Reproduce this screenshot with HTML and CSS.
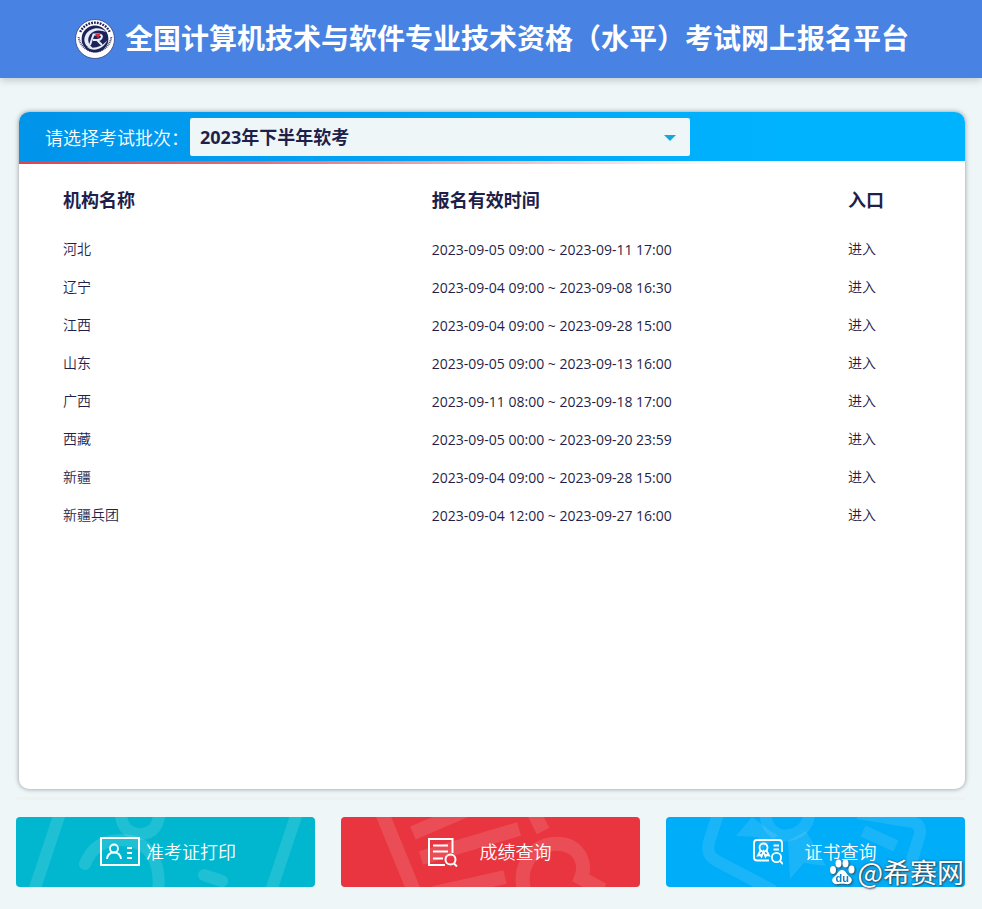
FILE: index.html
```html
<!DOCTYPE html>
<html lang="zh-CN">
<head>
<meta charset="utf-8">
<meta name="viewport" content="width=device-width, initial-scale=1">
<title>全国计算机技术与软件专业技术资格（水平）考试网上报名平台</title>
<link rel="stylesheet" href="styles.css">
</head>
<body>
<header class="site-header">
  <svg class="logo" viewBox="0 0 40 40" aria-hidden="true">
    <circle cx="20" cy="20" r="19.5" fill="#fff" stroke="#31417f" stroke-width=".8"/>
    <path d="M5.2 13A16.4 16.4 0 0 1 34.8 13" fill="none" stroke="#25265a" stroke-width="2.4" stroke-dasharray="1.8 1.100"/>
    <path d="M3.7 18A16.4 16.4 0 0 0 36.3 18" fill="none" stroke="#4a4c7c" stroke-width="2" stroke-dasharray="1 .8"/>
    <circle cx="20" cy="20" r="13.4" fill="#1b2358"/>
    <path d="M31 13C26 7.500 15 8 10.500 16C7 23 11.500 29.500 19 30C13.500 26 11.500 20.500 15 15.500C18.500 11 25 10.500 31 13Z" fill="#e8ecf8"/>
    <path d="M12 28C18 33 28 31 32.500 21C27.500 27.500 20 30 12 28Z" fill="#e8ecf8"/>
    <path d="M15 26L18.500 15.500H24Q28 16 26.500 19Q25.500 21 22 21L27 26M18 21h4" fill="none" stroke="#e8ecf8" stroke-width="2"/>
    <path d="M20 15l5.500 0-2.500 4.500z" fill="#d52b40"/>
  </svg>
  <h1 class="site-title">全国计算机技术与软件专业技术资格（水平）考试网上报名平台</h1>
</header>

<main class="page">
  <section class="card">
    <div class="card-head">
      <label class="batch-label" for="batch">请选择考试批次：</label>
      <div class="select-wrap">
        <select class="batch-select" id="batch"><option>2023年下半年软考</option></select>
        <svg class="caret" viewBox="0 0 12 6" aria-hidden="true"><path d="M0 0h12L6 6z" fill="#14a9d8"/></svg>
      </div>
    </div>
    <div class="accent"></div>
    <table class="list">
      <colgroup><col class="col-name"><col class="col-time"><col class="col-entry"></colgroup>
      <thead><tr><th scope="col">机构名称</th><th scope="col">报名有效时间</th><th scope="col">入口</th></tr></thead>
      <tbody>
        <tr><td>河北</td><td class="time">2023-09-05 09:00 ~ 2023-09-11 17:00</td><td><a href="#">进入</a></td></tr>
        <tr><td>辽宁</td><td class="time">2023-09-04 09:00 ~ 2023-09-08 16:30</td><td><a href="#">进入</a></td></tr>
        <tr><td>江西</td><td class="time">2023-09-04 09:00 ~ 2023-09-28 15:00</td><td><a href="#">进入</a></td></tr>
        <tr><td>山东</td><td class="time">2023-09-05 09:00 ~ 2023-09-13 16:00</td><td><a href="#">进入</a></td></tr>
        <tr><td>广西</td><td class="time">2023-09-11 08:00 ~ 2023-09-18 17:00</td><td><a href="#">进入</a></td></tr>
        <tr><td>西藏</td><td class="time">2023-09-05 00:00 ~ 2023-09-20 23:59</td><td><a href="#">进入</a></td></tr>
        <tr><td>新疆</td><td class="time">2023-09-04 09:00 ~ 2023-09-28 15:00</td><td><a href="#">进入</a></td></tr>
        <tr><td>新疆兵团</td><td class="time">2023-09-04 12:00 ~ 2023-09-27 16:00</td><td><a href="#">进入</a></td></tr>
      </tbody>
    </table>
  </section>

  <hr class="divider">

  <nav class="actions">
    <button class="action action-print" type="button">
      <svg class="pattern" viewBox="0 0 299 70" preserveAspectRatio="xMidYMid slice" aria-hidden="true">
        <g fill="none" stroke="#fff" stroke-opacity=".12" stroke-width="12">
          <path d="M44-4L18 74M281-4L255 74"/>
          <path d="M105-8C104 8 111 17 124 17C137 17 144 8 143-8"/>
          <path d="M69 47C76 29 89 23 105 23C132 23 146 43 142 76M188 58L206 64" stroke-linecap="round"/>
        </g>
      </svg>
      <svg class="icon icon-wide" viewBox="0 0 40 30" fill="none" stroke="#fff" aria-hidden="true">
        <rect x="1" y="1" width="38" height="27" stroke-width="2"/>
        <g stroke-width="1.800"><circle cx="14" cy="11.500" r="4"/><path d="M7 22C7.500 18 10 15.500 14 15.500C18 15.500 20.500 18 21 22M27 11h5M27 16h5M27 21h5"/></g>
      </svg>
      <span>准考证打印</span>
    </button>
    <button class="action action-score" type="button">
      <svg class="pattern" viewBox="0 0 299 70" preserveAspectRatio="xMidYMid slice" aria-hidden="true">
        <g fill="none" stroke="#fff" stroke-opacity=".12" stroke-width="14">
          <path d="M41-4L73 74M72 16L128-8M80 41L178 12M93 76L164 60M192-6L202 14"/>
          <path d="M184 76C176 52 190 29 212 27C235 25 247 43 240 61L262 73"/>
        </g>
      </svg>
      <svg class="icon" viewBox="0 0 30 30" fill="none" stroke="#fff" stroke-width="2" aria-hidden="true">
        <path d="M17 28H1V2h23.500v14M5 8.500h15M5 14.500h15M5 21.500h10"/>
        <circle cx="22.500" cy="22.500" r="5"/><path d="M26 26.500l3 3"/>
      </svg>
      <span>成绩查询</span>
    </button>
    <button class="action action-cert" type="button">
      <svg class="pattern" viewBox="0 0 299 70" preserveAspectRatio="xMidYMid slice" aria-hidden="true">
        <g fill="none" stroke="#fff" stroke-opacity=".1" stroke-width="12">
          <path d="M53-6L43 25C41 34 43 40 51 44L108 74M192-4L247 5C253 7 256 13 253 20L239 65" stroke-linejoin="round"/>
          <path d="M99-8C99 14 112 20 123 18C137 16 146 4 141-8M197 14L230 29"/>
        </g>
        <path d="M86 0L70 19L92 20L94 34L112 18L122 24L124 62L138 46L160 49L140 14L122 24L104 14Z" fill="#fff" fill-opacity=".1"/>
      </svg>
      <svg class="icon" viewBox="0 0 30 30" fill="none" stroke="#fff" stroke-width="1.800" aria-hidden="true">
        <path d="M16 23.500H4Q1 23.500 1 20.500V6Q1 3 4 3h22q3 0 3 3v9M20.500 8.500h5.500M20.500 12.500h5.500"/>
        <circle cx="10.500" cy="10.500" r="4"/><path d="M7.500 13.500L5 18.500l2.500-.500 1 1.500 2-5 2 5 1-1.500 2.500.500-2.500-5"/>
        <circle cx="23.500" cy="20.500" r="4.600"/><path d="M27 24l3 3"/>
      </svg>
      <span>证书查询</span>
    </button>
  </nav>
</main>

<div class="watermark">
  <svg class="paw" viewBox="0 0 26 26" aria-hidden="true">
    <g fill="#fff"><ellipse cx="4" cy="11" rx="3" ry="4"/><ellipse cx="9.500" cy="4.500" rx="3" ry="4"/><ellipse cx="16.500" cy="4.500" rx="3" ry="4"/><ellipse cx="22.500" cy="10.500" rx="3" ry="4"/>
    <path d="M13 11C9 11 9 15 5 18C1 21 4 26 9 25C12 24.500 14 24.500 17 25C22 26 25 21 21 18C17 15 17 11 13 11Z"/></g>
    <text class="paw-text" x="6.500" y="23">du</text>
  </svg>
  <span>@希赛网</span>
</div>
</body>
</html>
```

FILE: styles.css
```css
* { box-sizing: border-box; }

body {
  position: relative;
  margin: 0;
  min-height: 100vh;
  display: flex;
  flex-direction: column;
  background: #eef6f8;
  color: #1f1f4b;
  font-family: "Noto Sans CJK SC", sans-serif;
  font-size: 14px;
}

.site-header {
  display: flex;
  align-items: center;
  justify-content: center;
  gap: 10px;
  min-height: 78px;
  padding-left: 2px;
  background: #4883e4;
  box-shadow: 0 2px 8px rgba(0, 0, 0, .2);
}

.logo { width: 40px; height: 40px; flex: none; }

.site-title {
  margin: 0;
  padding-bottom: 4px;
  color: #fff;
  font-size: 28px;
  line-height: 40px;
  font-weight: 700;
}

.page {
  flex: 1;
  display: flex;
  flex-direction: column;
  padding: 34px 17px 22px 16px;
}

.card {
  flex: 1;
  margin: 0 0 0 3px;
  border-radius: 10px;
  overflow: hidden;
  background: #fff;
  box-shadow: 0 0 5px rgba(0, 0, 0, .4);
}

.card-head {
  display: flex;
  align-items: center;
  min-height: 49px;
  padding: 0 26px;
  background: linear-gradient(90deg, #0094ea, #00b3ff 80%);
}

.batch-label {
  flex: none;
  width: 145px;
  color: #fff;
  font-size: 18px;
  font-weight: 350;
  white-space: nowrap;
}

.select-wrap { position: relative; width: 500px; }

.batch-select {
  display: block;
  appearance: none;
  width: 100%;
  height: 38px;
  padding: 0 32px 0 10px;
  border: 0;
  border-radius: 2px;
  background: #eef6f8;
  color: #1f1f4b;
  font: 700 18px "Open Sans", "Noto Sans CJK SC", sans-serif;
}

.caret { position: absolute; right: 14px; top: 17px; width: 12px; height: 6px; pointer-events: none; }

.accent { height: 3px; background: linear-gradient(90deg, #dc4450, #e36d77 25%, #fff 75%); }

.list { width: 100%; border-collapse: collapse; table-layout: fixed; }
.col-name { width: 43%; }
.col-time { width: 44%; }
.list th, .list td { padding: 0 0 2px 6px; text-align: left; height: 38px; font-weight: 350; }
.list th { height: 66px; padding-top: 4px; padding-bottom: 0; font-size: 18px; font-weight: 700; }
.list th:first-child, .list td:first-child { padding-left: 44px; }
.list .time { padding-bottom: 0; font-family: "Open Sans", sans-serif; font-size: 14px; font-weight: 400; }
.list a { color: inherit; text-decoration: none; }

.divider { width: 100%; height: 3px; margin: 8px 0 17px; border: 0; background: #eef2f1; }

.actions { display: grid; grid-template-columns: repeat(3, 1fr); gap: 26px; }

.action {
  position: relative;
  display: flex;
  align-items: center;
  justify-content: center;
  gap: 22px;
  height: 70px;
  padding: 0 2px 0 0;
  border: 0;
  border-radius: 4px;
  overflow: hidden;
  color: #fff;
  font: 350 18px "Noto Sans CJK SC", sans-serif;
}

.action-print { gap: 6px; padding: 0 0 0 5px; background: #00b7cf; }
.action-score { background: #e9353f; }
.action-cert { background: #00adf8; }
.action span { position: relative; padding-bottom: 2px; }

.pattern { position: absolute; inset: 0; width: 100%; height: 100%; }
.icon { position: relative; width: 30px; height: 30px; flex: none; }
.icon-wide { width: 40px; }

.watermark {
  position: absolute;
  right: 18px;
  bottom: 20px;
  display: flex;
  align-items: center;
  gap: 2px;
  color: #fff;
  font-size: 27px;
  line-height: 34px;
  text-shadow: 0 0 2px #345, 1px 1px 2px #345;
  pointer-events: none;
}

.paw { width: 26px; height: 26px; filter: drop-shadow(1px 1px 1px #345); }
.paw-text { font: bold 11px "Liberation Sans", sans-serif; fill: #1583bd; text-shadow: none; }
```
